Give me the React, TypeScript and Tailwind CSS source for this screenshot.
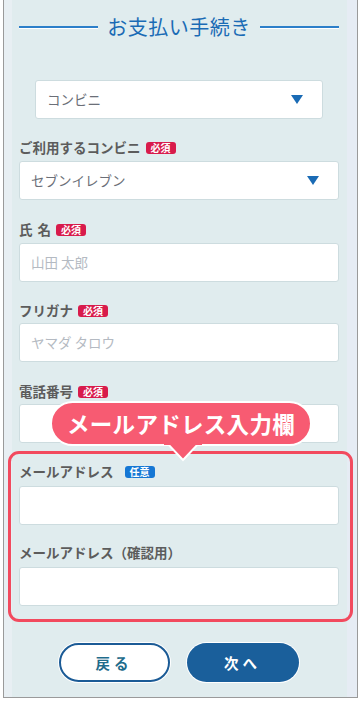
import React from "react";

const font = { fontFamily: '"Noto Sans CJK JP", "Noto Sans", sans-serif' };

function Req() {
  return (
    <span className="ml-[5px] inline-flex h-[12px] items-center rounded-[3px] bg-[#d81b4b] px-[5px] text-[10px] font-bold leading-none text-white">
      必須
    </span>
  );
}

function Opt() {
  return (
    <span className="ml-[11px] inline-flex h-[12px] items-center rounded-[3px] bg-[#1577d4] px-[5px] text-[10px] font-bold leading-none text-white">
      任意
    </span>
  );
}

function Label({ children }: { children: React.ReactNode }) {
  return (
    <div className="flex h-[18px] items-center text-[13.5px] font-bold leading-none text-[#5c5c5c]">
      {children}
    </div>
  );
}

function Input({ placeholder }: { placeholder?: string }) {
  return (
    <div className="flex h-[39px] items-center rounded-[3px] border-[1.5px] border-[#cddcdf] bg-white pl-[11px] text-[13.5px] text-[#b4bac2]">
      {placeholder}
    </div>
  );
}

function Select({ value }: { value: string }) {
  return (
    <div className="flex h-[39px] items-center justify-between rounded-[3px] border-[1.5px] border-[#cddcdf] bg-white pl-[11px] pr-[19px] text-[13.5px] text-[#6b6f78]">
      <span>{value}</span>
      <svg width="12" height="9" viewBox="0 0 12 9">
        <polygon points="0,0 12,0 6,9" fill="#1a6bb5" />
      </svg>
    </div>
  );
}

export default function App() {
  return (
    <div className="h-[704px] w-[361px] bg-white" style={font}>
      <div className="relative ml-[3px] h-[698px] w-[355px] border-x border-b border-[#9a9a9a] bg-[linear-gradient(to_right,#e8eff3_0px,#e8eff3_8px,#e0ecee_8px,#e0ecee_343px,#e6ecf4_343px)]">
        {/* title */}
        <div className="flex items-center pl-[15px] pr-[18px] pt-[13px]">
          <div className="h-[2px] flex-1 border-b border-white bg-[#2c7fc9] [box-sizing:content-box]" />
          <div className="px-[9px] text-[20px] leading-[28px] tracking-[0.5px] text-[#1a6bb5]">
            お支払い手続き
          </div>
          <div className="h-[2px] flex-1 border-b border-white bg-[#2c7fc9] [box-sizing:content-box]" />
        </div>

        <div className="mt-[39px] ml-[31px] mr-[34px]">
          <Select value="コンビニ" />
        </div>

        <div className="ml-[15px] mr-[18px] mt-[20px]">
          <Label>
            ご利用するコンビニ
            <Req />
          </Label>
          <div className="mt-[4px]">
            <Select value="セブンイレブン" />
          </div>

          <div className="mt-[21px]">
            <Label>
              <span className="mr-[5px]">氏</span>名
              <Req />
            </Label>
          </div>
          <div className="mt-[4px]">
            <Input placeholder="山田 太郎" />
          </div>

          <div className="mt-[20px]">
            <Label>
              フリガナ
              <Req />
            </Label>
          </div>
          <div className="mt-[3px]">
            <Input placeholder="ヤマダ タロウ" />
          </div>

          <div className="mt-[21px]">
            <Label>
              電話番号
              <Req />
            </Label>
          </div>
          <div className="mt-[3px]">
            <Input />
          </div>
        </div>

        {/* highlighted email section */}
        <div className="mx-[4px] mt-[8px] rounded-[11px] border-[3px] border-[#f24a5e] pl-[8px] pr-[11px] pb-[13px] pt-[9px]">
          <Label>
            メールアドレス
            <Opt />
          </Label>
          <div className="mt-[5px]">
            <Input />
          </div>
          <div className="mt-[19px]">
            <Label>メールアドレス（確認用）</Label>
          </div>
          <div className="mt-[5px]">
            <Input />
          </div>
        </div>

        {/* buttons */}
        <div className="mt-[21px] flex justify-center gap-[17px] pr-[4px]">
          <div className="flex h-[39px] w-[111px] items-center justify-center rounded-full border-[2.5px] border-[#1b5b96] bg-white text-[14.5px] font-bold tracking-[4px] text-[#1f6c8c] shadow-[0_0_0_1px_#ffffff]">
            戻る
          </div>
          <div className="flex h-[39px] w-[112px] items-center justify-center rounded-full bg-[#1a5f9b] text-[14.5px] font-bold tracking-[4px] text-white shadow-[0_0_0_1px_#ffffff]">
            次へ
          </div>
        </div>

        {/* callout bubble */}
        <div className="absolute left-[46px] top-[401px] flex h-[45px] w-[262px] items-center justify-center rounded-full border-2 border-white bg-[#f75b72] text-[22.5px] font-bold tracking-[0.3px] text-white">
          メールアドレス入力欄
          <svg
            className="absolute left-[112px] top-[39px]"
            width="38"
            height="20"
            viewBox="0 0 38 20"
          >
            <polygon points="2,0 36,0 19,18" fill="#f75b72" stroke="#ffffff" strokeWidth="2" />
            <rect x="0" y="0" width="38" height="3" fill="#f75b72" />
          </svg>
        </div>
      </div>
    </div>
  );
}
